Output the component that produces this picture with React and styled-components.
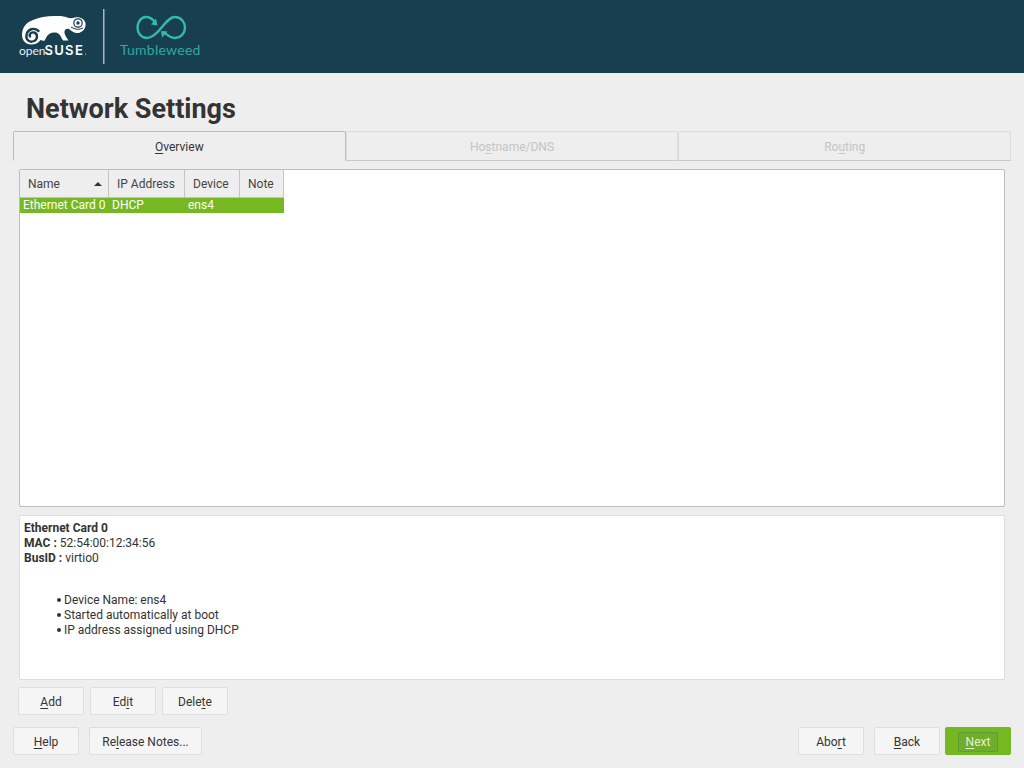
import styled, { createGlobalStyle } from "styled-components";

const GlobalStyle = createGlobalStyle`
	html, body {
		margin: 0;
		padding: 0;
		height: 768px;
		overflow: hidden;
		background: #eeeeee;
		font-family: Roboto, "Liberation Sans", sans-serif;
		color: #333333;
	}
	* { box-sizing: border-box; }
`;

const Page = styled.div`
	width: 1024px;
	height: 768px;
	display: flex;
	flex-direction: column;
	background: #eeeeee;
`;

const Banner = styled.header`
	height: 73px;
	background: #173f4f;
	display: flex;
	align-items: flex-start;
`;

const Logo = styled.svg`
	display: block;
	width: 220px;
	height: 73px;
`;

const Main = styled.main`
	flex: 1;
	display: flex;
	flex-direction: column;
	padding: 0 13px 13px;
`;

const Title = styled.h1`
	margin: 0;
	padding: 20px 0 0 13px;
	height: 58px;
	font-size: 27px;
	line-height: 32px;
	font-weight: 700;
	color: #333333;
`;

const TabBar = styled.div`
	display: flex;
	height: 30px;
`;

const Tab = styled.div`
	flex: 1;
	display: flex;
	justify-content: center;
	align-items: center;
	padding-top: 2px;
	font-size: 12px;
	border: 1px solid ${(p) => (p.$active ? "#bdbdbd" : "#dcdcdc")};
	border-bottom-color: ${(p) => (p.$active ? "transparent" : "#c8c8c8")};
	border-radius: 2px 2px 0 0;
	color: ${(p) => (p.$active ? "#333333" : "#c4c4c4")};
`;

const Content = styled.div`
	flex: 1;
	display: flex;
	flex-direction: column;
	padding: 8px 6px 0;
`;

const TablePanel = styled.div`
	height: 338px;
	background: #ffffff;
	border: 1px solid #bdbdbd;
	border-radius: 2px;
`;

const Table = styled.div`
	width: 264px;
`;

const HeaderRow = styled.div`
	display: grid;
	grid-template-columns: 89px 76px 55px 44px;
	height: 28px;
	background: #eeeeee;
	border-bottom: 1px solid #c4c4c4;
`;

const HeaderCell = styled.div`
	display: flex;
	align-items: center;
	justify-content: space-between;
	padding: 0 4px 0 8px;
	font-size: 12px;
	color: #444444;
	border-right: 1px solid #c4c4c4;
`;

const SortArrow = styled.span`
	width: 0;
	height: 0;
	margin: 1px 2px 0 0;
	border-left: 4px solid transparent;
	border-right: 4px solid transparent;
	border-bottom: 4px solid #333333;
`;

const Row = styled.div`
	display: grid;
	grid-template-columns: 89px 76px 55px 44px;
	height: 15px;
	background: #76b822;
	color: #ffffff;
	font-size: 12px;
	line-height: 15px;
`;

const Cell = styled.div`
	padding-left: 3px;
	white-space: nowrap;
`;

const Details = styled.div`
	height: 165px;
	margin-top: 8px;
	padding: 5px 4px 4px;
	background: #ffffff;
	border: 1px solid #dcdcdc;
	border-radius: 2px;
	font-size: 12px;
	line-height: 15px;
`;

const DetailList = styled.ul`
	margin: 27px 0 0;
	padding: 0 0 0 40px;
	list-style: none;
`;

const DetailItem = styled.li`
	position: relative;
	&::before {
		content: "";
		position: absolute;
		left: -7px;
		top: 5px;
		width: 4px;
		height: 4px;
		border-radius: 50%;
		background: #333333;
	}
`;

const ButtonRow = styled.div`
	display: flex;
	gap: 6px;
	margin: 7px 0 0 -1px;
`;

const Footer = styled.div`
	margin-top: auto;
	display: flex;
	gap: 10px;
`;

const Spacer = styled.div`
	flex: 1;
`;

const Button = styled.div`
	width: ${(p) => p.$width || 66}px;
	height: 28px;
	display: flex;
	justify-content: center;
	align-items: center;
	padding-top: 2px;
	font-size: 12px;
	color: #333333;
	background: #f5f5f5;
	border: 1px solid #dedede;
	border-radius: 2px;
`;

const PrimaryButton = styled.div`
	width: 66px;
	height: 28px;
	margin-left: -5px;
	display: flex;
	justify-content: center;
	align-items: center;
	font-size: 12px;
	color: #e4f2d2;
	background: #76b822;
	border-radius: 2px;
`;

const FocusBox = styled.span`
	width: 40px;
	height: 20px;
	display: flex;
	justify-content: center;
	align-items: center;
	padding-top: 1px;
	margin-top: 1px;
	background: #70ad2c;
	border: 1px solid #5f9e34;
	border-radius: 1px;
`;

const Key = styled.span`
	text-decoration: underline;
	text-underline-offset: 2px;
`;

const OpenSuseLogo = () => (
	<Logo viewBox="0 0 220 73">
		{/* chameleon body */}
		<path
			fill="#ffffff"
			d="M22 35 C22 27 27 22 33 20 C40 16.5 50 15.5 58 16 C62 16 65 16.5 67 17.5 C70 18.5 72 18.5 75 17.5 C80 16.5 84.5 19 85.5 23 C86 27.5 84 31 80 32.5 C76 34 72 32 69 29 C66 28 64 30 64.5 33 C65 36 67 38 68.5 40.5 L63 40.5 C61 37 60 33.5 56 32.5 C51 32 48 34 46.5 37 C45.5 39 45 40 44 41 L40.5 40 C38.5 43 35 44.5 31 44.5 C26 44.5 22 40.5 22 35 Z"
		/>
		{/* tail spiral */}
		<path
			fill="none"
			stroke="#173f4f"
			strokeWidth="2.4"
			strokeLinecap="round"
			d="M38.5 31 C34 27 27.5 29 26.5 35 C25.5 40 30 43 34 41 C38 39 38 33.5 34 32.5 C31 32 29 34 30 36.5"
		/>
		{/* eye and mouth */}
		<circle cx="78" cy="23" r="4.2" fill="#ffffff" stroke="#173f4f" strokeWidth="1.2" />
		<circle cx="78" cy="23" r="1.7" fill="#173f4f" />
		<path d="M71 27 Q77 31 83 28" fill="none" stroke="#173f4f" strokeWidth="1" />
		<text x="19" y="55" fill="#e8edef" fontFamily="Lato, sans-serif" fontSize="12">open</text>
		<text x="44.5" y="54.5" fill="#ffffff" fontFamily="Inter, sans-serif" fontSize="13" fontWeight="600" letterSpacing="1.3">SUSE</text>
		<circle cx="85.5" cy="54" r="0.5" fill="#ffffff" />
		<rect x="103" y="9" width="1.5" height="55" fill="#a9b8bf" />
		{/* tumbleweed infinity loop */}
		<path
			fill="none"
			stroke="#35b9ab"
			strokeWidth="2.4"
			d="M155 22 C152 18.5 149 17 146 17 C141 17 137.5 22 137.5 27.5 C137.5 33 141 38 147 38 C153 38 158 32 162 27 C166 22 170 17 175 17 C181 17 185 22 185 27.5 C185 33 181 38 175 38 C171 38 168 36 164 32"
		/>
		<path fill="#35b9ab" d="M157.5 25.5 L151 24.5 L156 18.5 Z M161 31 L167.5 31.5 L162 37.5 Z" />
		<text x="120" y="55" fill="#2fa9a0" fontFamily="Lato, Roboto, sans-serif" fontSize="14" letterSpacing="0.25">Tumbleweed</text>
	</Logo>
);

const App = () => {
	return (
		<Page>
			<GlobalStyle />
			<Banner>
				<OpenSuseLogo />
			</Banner>
			<Main>
				<Title>Network Settings</Title>
				<TabBar>
					<Tab $active><span><Key>O</Key>verview</span></Tab>
					<Tab><span>Ho<Key>s</Key>tname/DNS</span></Tab>
					<Tab><span>Ro<Key>u</Key>ting</span></Tab>
				</TabBar>
				<Content>
					<TablePanel>
						<Table>
							<HeaderRow>
								<HeaderCell>Name<SortArrow /></HeaderCell>
								<HeaderCell>IP Address</HeaderCell>
								<HeaderCell>Device</HeaderCell>
								<HeaderCell>Note</HeaderCell>
							</HeaderRow>
							<Row>
								<Cell>Ethernet Card 0</Cell>
								<Cell>DHCP</Cell>
								<Cell>ens4</Cell>
								<Cell />
							</Row>
						</Table>
					</TablePanel>
					<Details>
						<b>Ethernet Card 0</b>
						<br />
						<b>MAC : </b>52:54:00:12:34:56
						<br />
						<b>BusID : </b>virtio0
						<DetailList>
							<DetailItem>Device Name: ens4</DetailItem>
							<DetailItem>Started automatically at boot</DetailItem>
							<DetailItem>IP address assigned using DHCP</DetailItem>
						</DetailList>
					</Details>
					<ButtonRow>
						<Button><span><Key>A</Key>dd</span></Button>
						<Button><span>Ed<Key>i</Key>t</span></Button>
						<Button><span>Dele<Key>t</Key>e</span></Button>
					</ButtonRow>
				</Content>
				<Footer>
					<Button><span><Key>H</Key>elp</span></Button>
					<Button $width={113}><span>Re<Key>l</Key>ease Notes...</span></Button>
					<Spacer />
					<Button><span>Abo<Key>r</Key>t</span></Button>
					<Button><span><Key>B</Key>ack</span></Button>
					<PrimaryButton><FocusBox><span><Key>N</Key>ext</span></FocusBox></PrimaryButton>
				</Footer>
			</Main>
		</Page>
	);
};

export default App;
